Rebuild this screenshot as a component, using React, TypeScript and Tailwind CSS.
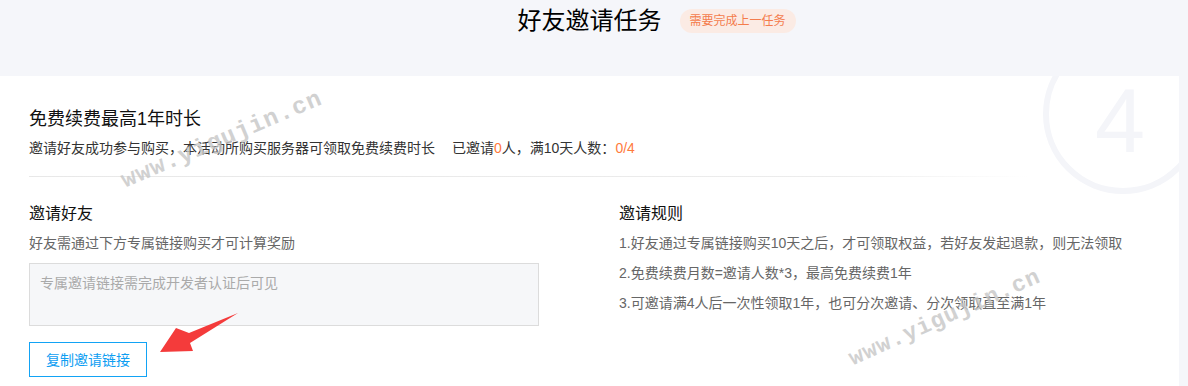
export default function App() {
  const rules = [
    "1.好友通过专属链接购买10天之后，才可领取权益，若好友发起退款，则无法领取",
    "2.免费续费月数=邀请人数*3，最高免费续费1年",
    "3.可邀请满4人后一次性领取1年，也可分次邀请、分次领取直至满1年",
  ];

  return (
    <div className="relative w-[1188px] h-[386px] overflow-hidden bg-[#f5f6fa] font-['Liberation_Sans','Noto_Sans_CJK_SC',sans-serif]">
      {/* header */}
      <div className="w-[1179px] h-[76px] pt-[6px] flex justify-center">
        <div className="relative">
          <h1 className="text-[24px] leading-[30px] text-black whitespace-nowrap">好友邀请任务</h1>
          <span className="absolute left-full top-[3px] ml-[18px] h-[24px] px-[10px] rounded-full bg-[#fbebe4] text-[#f47c4c] text-[12px] leading-[24px] whitespace-nowrap">
            需要完成上一任务
          </span>
        </div>
      </div>

      {/* card */}
      <div className="relative w-[1179px] h-[310px] bg-white overflow-hidden px-[29px] pt-[31px]">
        <div className="absolute left-[1043px] -top-[42px] w-[160px] h-[160px] rounded-full border-[6px] border-[#f4f5f9]" />
        <span className="absolute left-[1090px] top-0 w-[60px] text-center text-[90px] leading-none text-[#f4f5f9] font-['Liberation_Sans',sans-serif]">
          4
        </span>

        <div className="relative">
          <h2 className="text-[18px] leading-[24px] text-[#111]">免费续费最高1年时长</h2>
          <p className="mt-[7px] text-[14px] leading-[20px] text-[#333] whitespace-nowrap">
            邀请好友成功参与购买，本活动所购买服务器可领取免费续费时长
            <span className="ml-[17px]">
              已邀请<span className="text-[#ff7a3d]">0</span>人，满10天人数：<span className="text-[#ff7a3d]">0/4</span>
            </span>
          </p>
          <div className="mt-[18px] h-px w-[1000px] bg-gradient-to-r from-[#e8e8e8] via-[#ececec] via-80% to-transparent" />

          <div className="mt-[26px] flex">
            <div className="w-[590px]">
              <h3 className="text-[16px] leading-[22px] text-[#111]">邀请好友</h3>
              <p className="mt-[8px] text-[14px] leading-[20px] text-[#666]">好友需通过下方专属链接购买才可计算奖励</p>
              <div className="mt-[10px] w-[510px] h-[63px] border border-[#dcdcdc] bg-[#f6f7f9] px-[10px] pt-[9px] text-[14px] leading-[20px] text-[#aaa]">
                专属邀请链接需完成开发者认证后可见
              </div>
              <button className="mt-[16px] w-[118px] h-[35px] border border-[#12a3f5] text-[#0e9ef2] text-[14px] leading-[20px]">
                复制邀请链接
              </button>
            </div>
            <div>
              <h3 className="text-[16px] leading-[22px] text-[#111]">邀请规则</h3>
              <ul className="mt-[3px] text-[14px] leading-[30px] text-[#666]">
                {rules.map((r) => (
                  <li key={r} className="whitespace-nowrap">{r}</li>
                ))}
              </ul>
            </div>
          </div>
        </div>
      </div>

      {/* red arrow annotation */}
      <svg className="absolute left-[150px] top-[305px]" width="95" height="55" viewBox="0 0 95 55">
        <polygon points="88,8 39,28 26,23 10,47 43,46 40,38" fill="#f43b3b" />
      </svg>

      {/* watermarks */}
      <span className="absolute left-[222px] top-[140px] -translate-x-1/2 -translate-y-1/2 -rotate-[23deg] text-[24px] font-bold tracking-[1px] text-[#c6c6c6] opacity-80 font-['Liberation_Mono',monospace] whitespace-nowrap pointer-events-none">
        www.yigujin.cn
      </span>
      <span className="absolute left-[945px] top-[318px] -translate-x-1/2 -translate-y-1/2 -rotate-[24deg] text-[23px] font-bold tracking-[1px] text-[#c6c6c6] opacity-80 font-['Liberation_Mono',monospace] whitespace-nowrap pointer-events-none">
        www.yigujin.cn
      </span>
    </div>
  );
}
